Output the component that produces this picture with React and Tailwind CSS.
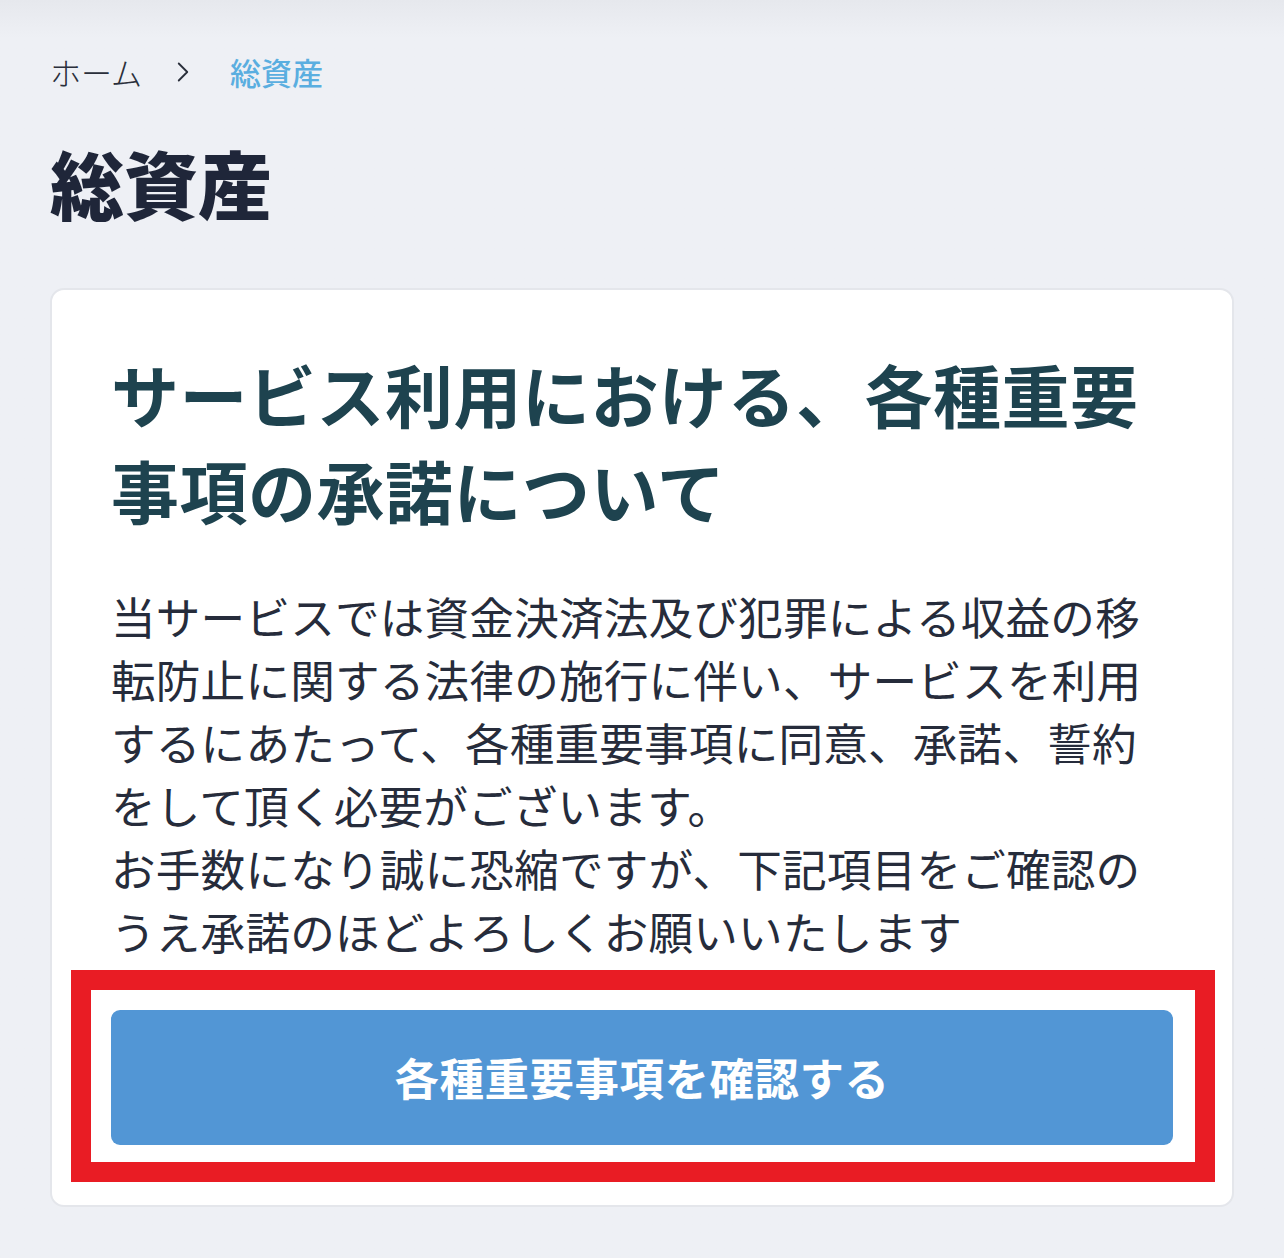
import { ChevronRight } from 'lucide-react';

const App = () => {
  return (
    <div className="min-h-[1258px] bg-[#eef0f5] bg-gradient-to-b from-[#e6e8ed] via-[#eef0f5] via-[3%] to-[#eef0f5] px-[50px] pt-[52px] pb-[50px] font-['Noto_Sans_CJK_JP','Noto_Sans',sans-serif]">
      <nav className="flex items-center h-[40px] text-[31px] leading-[40px]">
        <span className="text-[#2a2f3b] font-light">ホーム</span>
        <ChevronRight className="w-[34px] h-[34px] ml-[24px] mr-[30px] text-[#2a2f3b]" strokeWidth={1.3} />
        <span className="text-[#5aaee0] font-medium">総資産</span>
      </nav>

      <h1 className="mt-[50px] text-[74px] leading-[80px] font-black text-[#1f2639]">総資産</h1>

      <div className="mt-[66px] bg-white border-2 border-[#e4e6eb] rounded-[14px] px-[59px] pt-[56px] pb-[60px]">
        <h2 className="text-[68px] leading-[96px] font-bold text-[#1e434f] tracking-[0.5px]">
          サービス利用における、各種重要事項の承諾について
        </h2>

        <p className="mt-[46px] text-[44.6px] leading-[63px] text-[#262c3b] tracking-[0.2px]">
          当サービスでは資金決済法及び犯罪による収益の移転防止に関する法律の施行に伴い、サービスを利用するにあたって、各種重要事項に同意、承諾、誓約をして頂く必要がございます。
          <br />
          お手数になり誠に恐縮ですが、下記項目をご確認のうえ承諾のほどよろしくお願いいたします
        </p>

        <div className="relative mt-[48px]">
          <button className="w-full h-[135px] rounded-[9px] bg-[#5296d5] text-white text-[44.5px] font-bold tracking-[0.5px]">
            各種重要事項を確認する
          </button>
          <div className="absolute -top-[40px] -bottom-[37px] -left-[40px] -right-[42px] border-[20px] border-[#e91c24] pointer-events-none" />
        </div>
      </div>
    </div>
  );
};

export default App;
